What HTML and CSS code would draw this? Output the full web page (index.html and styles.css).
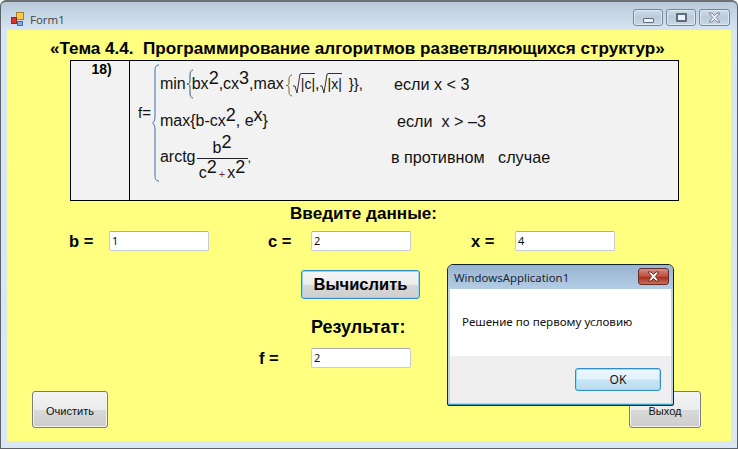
FILE: index.html
```html
<!DOCTYPE html>
<html lang="ru">
<head>
<meta charset="utf-8">
<title>Form1</title>
<link rel="stylesheet" href="styles.css">
</head>
<body>
<div class="window">
  <header class="titlebar">
    <svg class="appicon" width="15" height="14" viewBox="0 0 15 14"><rect x="6.500" y="0.500" width="7" height="7" fill="#f7c948" stroke="#a9812a"/><rect x="1.500" y="5.500" width="5" height="6" fill="#d8342c" stroke="#8a2a2a"/><rect x="7.500" y="9.500" width="5" height="4" fill="#7fa8e0" stroke="#4a6fa5"/></svg>
    <span class="formtitle">Form1</span>
    <div class="caption">
      <span class="capbtn"><i class="g-min"></i></span>
      <span class="capbtn"><i class="g-max"></i></span>
      <span class="capbtn capclose"><svg width="15" height="11" viewBox="0 0 15 11"><path d="M2 1h3l2.500 2.500L10 1h3L9.300 5.500 13 10h-3L7.500 7.500 5 10H2l3.700-4.500z" fill="#e8edf3" stroke="#7a8794" stroke-width="1"/></svg></span>
    </div>
  </header>
  <main class="client">
    <h1 class="topic">«Тема 4.4.&nbsp; Программирование алгоритмов разветвляющихся структур»</h1>
    <section class="task">
      <div class="num">18)</div>
      <div class="formula">
        <span class="feq">f=</span>
        <svg class="bigbrace" width="8" height="118" viewBox="0 0 8 118"><path d="M7 1C4 1 3 3 3 7V52C3 56 2 58 0.500 59C2 60 3 62 3 66V111C3 115 4 117 7 117" fill="none" stroke="#3f6f9f" stroke-width="1"/></svg>
        <div class="cases">
          <div class="case case1">
            <span class="expr e1">min<svg class="br" width="8" height="30" viewBox="0 0 8 30"><path d="M7 1C5 1 4 3 4 6V12C4 14 3 15 1 15C3 15 4 16 4 18V24C4 27 5 29 7 29" fill="none" stroke="#3a5a70"/></svg>bx<sup>2</sup>,cx<sup>3</sup>,max<svg class="br2" width="8" height="23" viewBox="0 0 8 23"><path d="M7 1C5 1 4 3 4 5V9C4 11 3 11.500 1 11.500C3 11.500 4 12 4 14V18C4 20 5 22 7 22" fill="none" stroke="#7a6a20"/></svg><svg class="sqrt" width="8" height="21" viewBox="0 0 8 21"><path d="M0 13H2L4 20L7 1H8" fill="none" stroke="#333"/></svg><span class="rad">|c|</span>,<svg class="sqrt" width="8" height="21" viewBox="0 0 8 21"><path d="M0 13H2L4 20L7 1H8" fill="none" stroke="#333"/></svg><span class="rad">|x|</span><span class="closers">}},</span></span>
            <span class="cond">если x &lt; 3</span>
          </div>
          <div class="case case2">
            <span class="expr e2">max{b-cx<sup>2</sup>, e<sup>x</sup>}</span>
            <span class="cond">если&nbsp; x &gt; –3</span>
          </div>
          <div class="case case3">
            <span class="expr e3">arctg<span class="frac"><span class="fnum">b<sup>2</sup></span><span class="fden">c<sup>2</sup><small>+</small>x<sup>2</sup></span></span><span class="comma">,</span></span>
            <span class="cond">в противном&nbsp;&nbsp; случае</span>
          </div>
        </div>
      </div>
    </section>
    <h2 class="lbl-input">Введите данные:</h2>
    <div class="inputs">
      <label class="field fb"><span class="var">b =</span><span class="tb">1</span></label>
      <label class="field fc"><span class="var">c =</span><span class="tb">2</span></label>
      <label class="field fx"><span class="var">x =</span><span class="tb">4</span></label>
    </div>
    <div class="calcrow"><button class="calc">Вычислить</button></div>
    <h2 class="lbl-res">Результат:</h2>
    <label class="field fres"><span class="var">f =</span><span class="tb">2</span></label>
    <div class="actions">
      <button class="btn">Очистить</button>
      <button class="btn btn-exit">Выход</button>
    </div>
  </main>
</div>
<div class="dialog">
  <div class="dlgbar">
    <span class="dlgtitle">WindowsApplication1</span>
    <span class="dlgclose"><svg width="15" height="11" viewBox="0 0 15 11"><path d="M2 1h3l2.500 2.500L10 1h3L9.300 5.500 13 10h-3L7.500 7.500 5 10H2l3.700-4.500z" fill="#fff" stroke="#6e2a22" stroke-width="1"/></svg></span>
  </div>
  <div class="dlgbody">Решение по первому условию</div>
  <div class="dlgfoot"><button class="ok">OK</button></div>
</div>
</body>
</html>
```
FILE: styles.css
```css
* { box-sizing: border-box; }
html, body { margin: 0; height: 449px; overflow: hidden; background: #fff; }
body { font-family: "Liberation Sans", Arial, sans-serif; color: #000; position: relative; }
.window {
  width: 738px; height: 449px; display: flex; flex-direction: column;
  border: 1px solid #5c6268; border-top: 2px solid #6a7076; border-radius: 6px 6px 0 0;
  background: linear-gradient(#b9cadb, #d9e6f3 30px, #dbe7f3);
  padding: 0 6px 7px;
}
.titlebar { height: 28px; flex: none; display: flex; align-items: center; padding: 6px 0 0 3px; }
.formtitle { font-size: 11.500px; color: #444; margin-left: 5px; font-family: "Open Sans", "Liberation Sans", sans-serif; }
.caption { margin-left: auto; display: flex; gap: 3px; margin-top: -3px; margin-right: 1px; }
.capbtn {
  width: 30px; height: 17px; border: 1px solid #76879a; border-radius: 3px;
  background: linear-gradient(#cfdbe7, #bccbdb 50%, #c9d7e5);
  display: flex; align-items: center; justify-content: center; box-shadow: inset 0 0 0 1px #dfe8f1;
}
.capclose { width: 31px; }
.g-min { width: 11px; height: 5px; margin-top: 5px; border: 1px solid #5d6b7a; background: #edf2f7; border-radius: 1px; }
.g-max { width: 11px; height: 9px; border: 2px solid #5d6b7a; background: #edf2f7; border-radius: 1px; }
.client { width: 724px; height: 411px; background: #ffff80; }
.topic { margin: 0; padding: 10px 0 0 43px; height: 30px; font-size: 17.100px; line-height: 18px; font-weight: 700; white-space: nowrap; }
.task {
  margin-left: 63px; width: 609px; height: 141px; border: 1px solid #000; border-width: 1.500px 1px;
  background: #f2f2f2; display: flex;
}
.num { width: 59px; border-right: 1px solid #000; text-align: center; font-size: 14px; line-height: 16px; font-weight: 700; padding-left: 3px; flex: none; }
.formula { display: flex; align-items: flex-start; font-size: 16px; line-height: 18px; color: #111; }
.feq { margin: 44px 0 0 8px; font-size: 15px; line-height: 16px; }
.bigbrace { margin: 3px 0 0 1px; flex: none; }
.cases { padding-top: 14px; }
.case { display: flex; align-items: flex-start; white-space: nowrap; }
.case1 { height: 37px; }
.case2 { height: 36px; }
.case3 { height: 36px; }
.expr { display: block; height: 18px; flex: none; }
.e1 { width: 234px; }
.e2 { width: 237px; }
.e3 { width: 231px; }
sup { font-size: 18px; line-height: 10px; vertical-align: baseline; position: relative; top: -5px; }
.br { margin: -20px -2px -10px 0; }
.br2 { margin: -15px 0 -8px 1px; }
.sqrt { margin: -16px 0 -5px 0; }
.rad { border-top: 1px solid #333; font-size: 14px; padding: 2px 0 0; }
.closers { margin-left: 7px; font-size: 15px; }
.cond { font-size: 16.200px; line-height: 18px; }
.frac { display: inline-flex; flex-direction: column; align-items: center; vertical-align: top; margin: -13px 0 0 1px; width: 51px; }
.fnum { height: 24px; line-height: 25px; border-bottom: 1px solid #222; width: 100%; text-align: center; }
.fden { height: 24px; line-height: 27px; white-space: nowrap; }
.fden small { font-size: 11px; color: #7a2a2a; margin: 0 2px; }
.comma { font-size: 13px; }
.lbl-input, .lbl-res { margin: 0; line-height: 18px; font-weight: 700; }
.lbl-input { padding: 4px 0 0 283px; height: 30px; font-size: 17.100px; }
.inputs { display: flex; height: 39px; }
.field { display: flex; align-items: center; height: 20px; }
.var { font-size: 16.500px; font-weight: 700; }
.fb { margin-left: 62px; width: 199px; }
.fb .var { width: 40px; }
.fc .var { width: 43px; }
.fc { width: 203px; }
.fx .var { width: 44px; }
.tb {
  width: 100px; height: 20px; background: #fff; border: 1px solid #c8ccd2; border-top-color: #a8acb0;
  border-radius: 2px; font-size: 11px; line-height: 18px; padding-left: 2px; color: #111;
  font-family: "Noto Sans", "Liberation Sans", sans-serif;
}
.calcrow { padding-left: 294px; height: 48px; }
.calc {
  width: 119px; height: 29px; font: 700 16.500px "Liberation Sans", Arial, sans-serif; padding: 0;
  border: 1px solid #2f8fc4; border-radius: 3px; box-shadow: inset 0 0 0 1px #8fd4f4;
  background: linear-gradient(#f6f6f6, #ebebeb 50%, #d6d6d6 52%, #cfcfcf);
  color: #000;
}
.lbl-res { padding-left: 304px; height: 20px; font-size: 18px; }
.fres { margin: 10px 0 0 252px; }
.fres .var { width: 52px; }
.actions { display: flex; justify-content: space-between; margin: 23px 30px 0 25px; }
.btn {
  width: 76px; height: 37px; padding: 2px 0 0; font: 11px "Liberation Sans", Arial, sans-serif; color: #111;
  border: 1px solid #7c7c7c; border-radius: 3px; box-shadow: inset 0 0 0 1px #f4f4f4;
  background: linear-gradient(#f3f3f3, #ebebeb 50%, #d9d9d9 52%, #cdcdcd);
}
.btn-exit { width: 72px; }
.dialog {
  position: absolute; left: 447px; top: 264px; width: 227px; height: 142px;
  border: 1px solid #12232f; border-radius: 6px 6px 2px 2px; display: flex; flex-direction: column;
  background: #bcd3ea; padding: 0 2px 2px; box-shadow: inset 0 -1px 0 #2fa4c8;
}
.dlgbar { height: 24px; flex: none; display: flex; align-items: center; justify-content: space-between; background: linear-gradient(#99b2cf, #b4cde6); margin: 0 -2px; padding: 0 4px 0 6px; border-radius: 5px 5px 0 0; }
.dlgtitle { font: 11.400px "Noto Sans", "Liberation Sans", sans-serif; color: #1a2530; }
.dlgclose { width: 31px; height: 17px; margin-top: -2px; border: 1px solid #5c2f2a; border-radius: 3px; display: flex; align-items: center; justify-content: center; background: linear-gradient(#d58f86, #c04a3a 50%, #a8301f 55%, #cc6d5e); }
.dlgbody { height: 67px; flex: none; background: #fff; font: 11.600px/17px "Noto Sans", "Liberation Sans", sans-serif; padding: 24px 0 0 12px; color: #111; }
.dlgfoot { flex: 1; background: #efefef; display: flex; justify-content: flex-end; align-items: flex-start; padding: 12px 10px 0 0; }
.ok {
  width: 86px; height: 23px; padding: 0; font: 12px "Noto Sans", "Liberation Sans", sans-serif; color: #111;
  border: 1px solid #2f8fc4; border-radius: 3px; box-shadow: inset 0 0 0 1px #8fe0f8;
  background: linear-gradient(#eef7fd, #e2f1fb 48%, #c7e4f5 52%, #bbdcf0);
}
```
